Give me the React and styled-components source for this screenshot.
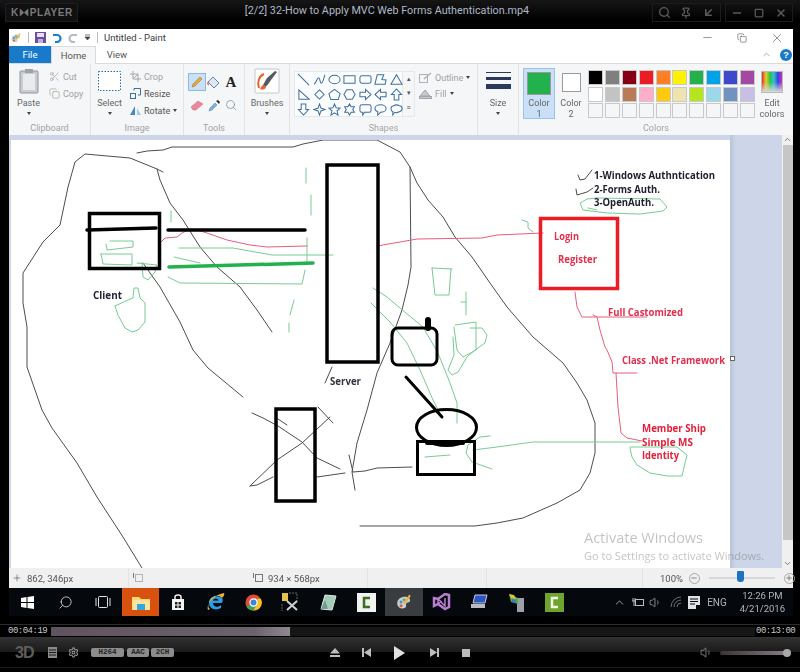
import styled, { createGlobalStyle } from 'styled-components';
import { Search, Pin, ArrowDownLeft, Minus, Square, X, ChevronUp, ChevronDown, Settings, Volume1, Plus, Scissors, Copy } from 'lucide-react';

const GlobalStyle = createGlobalStyle`
  html, body { margin: 0; padding: 0; background: #000; }
  body { font-family: Roboto, "Liberation Sans", sans-serif; }
`;

const ui = '"Open Sans", "Noto Sans", sans-serif';

// ---- drawing data, in page coordinates
const ink = [
  [[163, 172], [157, 169], [130, 158], [85, 154], [75, 162], [68, 187], [60, 225], [43, 242], [23, 273], [23, 303], [27, 327], [27, 367], [42, 410], [52, 428], [77, 463], [97, 497], [123, 537], [142, 568]],
  [[157, 169], [160, 180], [170, 203], [183, 220], [200, 247], [217, 267], [240, 287], [257, 310], [272, 332]],
  [[143, 263], [160, 287], [180, 322], [193, 350], [208, 368], [243, 397]],
  [[137, 153], [147, 151], [163, 150], [172, 147], [293, 147], [303, 144], [323, 140], [377, 140], [400, 152], [410, 167], [411, 267], [408, 285], [402, 310], [390, 343], [377, 373], [367, 410], [357, 443], [352, 472], [355, 490]],
  [[349, 455], [353, 472]],
  [[353, 472], [365, 471], [377, 468], [412, 467]],
  [[360, 526], [475, 526], [497, 523], [523, 518], [557, 503], [580, 490], [590, 473], [595, 453], [595, 423], [587, 400], [577, 383], [563, 363], [548, 350], [533, 337], [507, 307], [490, 283], [472, 257], [455, 237], [443, 217], [428, 200], [417, 183], [410, 167]],
  [[252, 413], [263, 418], [278, 426], [302, 442], [317, 458], [340, 469]],
  [[250, 486], [277, 460], [302, 443], [330, 417]],
  [[250, 486], [257, 485], [273, 477]],
  [[318, 407], [333, 423]],
  [[317, 477], [345, 473]],
  [[278, 419], [287, 425]],
  [[332, 367], [325, 383]],
  [[578, 175], [580, 180], [585, 179], [592, 170]],
  [[576, 189], [577, 195], [587, 192], [593, 188]],
];

const green = [
  [[110, 241], [133, 241], [133, 247], [107, 250], [106, 244]],
  [[101, 254], [132, 254], [132, 265], [103, 264], [101, 254]],
  [[137, 263], [157, 265], [155, 272], [148, 280], [143, 277], [142, 263]],
  [[179, 248], [233, 248], [272, 255], [333, 255]],
  [[174, 257], [200, 263]],
  [[168, 277], [180, 283], [302, 284], [305, 270]],
  [[306, 168], [306, 183]],
  [[311, 195], [311, 215]],
  [[307, 238], [307, 263]],
  [[294, 300], [290, 315]],
  [[289, 323], [289, 332]],
  [[171, 211], [171, 222]],
  [[115, 306], [128, 300], [133, 298], [134, 288], [138, 288], [140, 298], [145, 303], [145, 322], [138, 330], [132, 332], [125, 328], [118, 315], [115, 306]],
  [[373, 288], [387, 297], [400, 308], [423, 327], [438, 353], [450, 383], [457, 403], [457, 423]],
  [[371, 303], [390, 322], [407, 343], [420, 370], [433, 400], [443, 419]],
  [[432, 268], [452, 269]],
  [[432, 268], [435, 295], [449, 295], [451, 269]],
  [[466, 292], [466, 315]],
  [[461, 302], [466, 302]],
  [[453, 337], [454, 355], [448, 370], [452, 375], [458, 372], [467, 357], [475, 350], [485, 343], [487, 335], [482, 328], [470, 328]],
  [[455, 325], [476, 322], [476, 350], [463, 357], [457, 350], [454, 327]],
  [[473, 450], [497, 447], [533, 442], [640, 442]],
  [[490, 436], [480, 437], [468, 445], [466, 453], [472, 462], [492, 469]],
  [[425, 457], [450, 455]],
  [[630, 448], [632, 457], [637, 465], [650, 473], [667, 476], [682, 476], [685, 463], [687, 455], [677, 447], [630, 447]],
  [[597, 198], [587, 199], [580, 203], [583, 210], [607, 213], [640, 214], [663, 211], [667, 207], [660, 199], [597, 198]],
  [[588, 208], [597, 210]],
  [[522, 220], [528, 222], [528, 228], [533, 232]],
];

const red = [
  [[161, 242], [165, 238], [177, 237], [182, 233], [190, 229], [197, 230], [207, 233], [227, 240], [250, 245], [267, 247], [307, 246]],
  [[377, 246], [400, 242], [417, 239], [482, 238], [497, 235], [543, 233]],
  [[575, 292], [577, 307], [582, 317], [647, 317]],
  [[593, 315], [597, 317], [600, 330], [605, 347], [607, 350], [612, 362], [613, 373], [637, 373]],
  [[616, 373], [618, 407], [621, 433], [627, 438], [642, 441]],
];

const labels = [
  { x: 93, y: 299, w: 29, t: 'Client', c: '#23233a' },
  { x: 330, y: 385, w: 31, t: 'Server', c: '#33333f' },
  { x: 594, y: 179, w: 121, t: '1-Windows Authntication', c: '#1e1e2c' },
  { x: 594, y: 193, w: 66, t: '2-Forms Auth.', c: '#1e1e2c' },
  { x: 594, y: 206, w: 60, t: '3-OpenAuth.', c: '#1e1e2c' },
  { x: 554, y: 240, w: 25, t: 'Login', c: '#e12f4c' },
  { x: 558, y: 263, w: 39, t: 'Register', c: '#e12f4c' },
  { x: 608, y: 316, w: 75, t: 'Full Castomized', c: '#e12f4c' },
  { x: 622, y: 364, w: 103, t: 'Class .Net Framework', c: '#e12f4c' },
  { x: 642, y: 432, w: 64, t: 'Member Ship', c: '#e3203a' },
  { x: 642, y: 446, w: 51, t: 'Simple MS', c: '#e3203a' },
  { x: 642, y: 459, w: 37, t: 'Identity', c: '#e3203a' },
];

const pts = (list) => list.map((p) => p.join(',')).join(' ');

const shapePaths = [
  'M1 1L13 13', 'M1 12c3-1 3-7 5-7s1 6 3 6 3-8 4-9', 'M7 2.5c3.5 0 6 2 6 4.5s-2.500 4.500-6 4.500-6-2-6-4.500 2.500-4.500 6-4.500z', 'M1 3H13V11H1Z', 'M3 3H11Q13 3 13 5V9Q13 11 11 11H3Q1 11 1 9V5Q1 3 3 3Z', 'M1 12L3.500 2H10.500L8.500 7 13 7.500 12 12Z', 'M7 2L13 12H1Z',
  'M2 2L13 12H2Z', 'M7 2L12 7 7 12 2 7Z', 'M7 1.500L13 6 11 12.500H3L1 6Z', 'M4 2H10L13 7 10 12H4L1 7Z', 'M1 4.500H7V1.500L13 7 7 12.500V9.500H1Z', 'M13 4.500H7V1.500L1 7 7 12.500V9.500H13Z', 'M4.500 13V7H1.500L7 1 12.500 7H9.500V13Z',
  'M4.500 1V7H1.500L7 13 12.500 7H9.500V1Z', 'M7 1L8.500 5.500 13 7 8.500 8.500 7 13 5.500 8.500 1 7 5.500 5.500Z', 'M7 1L8.800 5.200 13 5.600 9.800 8.400 10.800 13 7 10.500 3.200 13 4.200 8.400 1 5.600 5.200 5.200Z', 'M7 1L8.700 4H12.200L10.500 7 12.200 10H8.700L7 13 5.300 10H1.800L3.500 7 1.800 4H5.300Z', 'M3 2H11Q13 2 13 4V8Q13 10 11 10H6L4 13V10H3Q1 10 1 8V4Q1 2 3 2Z', 'M7 2C10.500 2 13 3.800 13 6S10.500 10 7 10L4 13V9.500C2.200 8.800 1 7.500 1 6 1 3.800 3.500 2 7 2Z', 'M4 3Q7 1 10 3 13 3 13 6 13 9 10 9.500 7 11 5 10L3 13V9.500Q1 8.500 1 6 1 3.500 4 3Z',
];

const paletteTop = ['#000000', '#7f7f7f', '#880015', '#ed1c24', '#ff7f27', '#fff200', '#22b14c', '#00a2e8', '#3f48cc', '#a349a4'];
const paletteMid = ['#ffffff', '#c3c3c3', '#b97a57', '#ffaec9', '#ffc90e', '#efe4b0', '#b5e61d', '#99d9ea', '#7092be', '#c8bfe7'];
const paletteEmpty = Array(10).fill('#f5f6f7');

// ---- small drawn icons
const PaintIcon = ({ size = 12 }) => (
  <svg width={size} height={size} viewBox="0 0 24 24">
    <path d="M3 14c0-6 5-9 10-9 5 0 8 3 7 6-1 2-4 1-5 3-1 3 1 4-2 6-5 2-10-1-10-6z" fill="#c9ced4" />
    <circle cx="8" cy="12" r="2" fill="#3f8fd6" />
    <circle cx="12" cy="9" r="2" fill="#58b368" />
    <circle cx="8" cy="17" r="2" fill="#e05a3a" />
    <path d="M19 2l2 2-7 10-3 1 1-3z" fill="#e9b23c" />
  </svg>
);

const Caret = styled.span`
  display: block;
  width: 0;
  height: 0;
  border-left: 2.5px solid transparent;
  border-right: 2.5px solid transparent;
  border-top: 3px solid #444;
`;

// keeps a drawn icon a few pixels off its neighbour
const Nudge = styled.span`
  display: inline-flex;
  flex: none;
  margin-left: ${(p) => p.$l || 0}px;
  margin-right: ${(p) => p.$r || 0}px;
`;

// ---- player chrome
const Player = styled.div`
  width: 800px;
  height: 672px;
  background: #000;
  overflow: hidden;
  display: flex;
  flex-direction: column;
`;

const TitleBar = styled.header`
  height: 29px;
  flex: none;
  box-sizing: border-box;
  display: flex;
  align-items: flex-start;
  padding: 3px 7px 0 5px;
  background: linear-gradient(#161616, #000 70%);
`;

const Logo = styled.div`
  width: 73px;
  height: 19px;
  box-sizing: border-box;
  padding-left: 5px;
  border: 1px solid #1e1e1e;
  background: #101010;
  color: #7a7a7a;
  font: bold 10px/17px "Liberation Sans", sans-serif;
  letter-spacing: 0.55px;
`;

const MovieTitle = styled.div`
  flex: 1;
  text-align: center;
  padding-left: 44px;
  color: #aeb9c6;
  font: 10.8px/15px Roboto, sans-serif;
  white-space: nowrap;
`;

const CtrlGroup = styled.div`
  display: flex;
  align-items: center;
  justify-content: space-around;
  width: ${(p) => p.$w}px;
  margin-left: ${(p) => p.$ml || 0}px;
  height: 19px;
  color: #5a5a5a;
  border: 1px solid #1c1c1c;
  box-sizing: border-box;
`;

const Screen = styled.div`
  margin-left: 9px;
  width: 784px;
  height: 587px;
  flex: none;
  display: flex;
  flex-direction: column;
  filter: blur(0.35px);
`;

// ---- paint window
const PaintTitle = styled.div`
  height: 17px;
  flex: none;
  background: #fff;
  display: flex;
  align-items: center;
  padding-left: 1px;
  gap: 6px;
  color: #3a3a3a;
  font: 9.5px Roboto, sans-serif;
`;

const TitleSep = styled.span`
  width: 1px;
  height: 11px;
  background: #b9b9b9;
`;

const WinButtons = styled.div`
  margin-left: auto;
  display: flex;
  align-items: center;
  gap: 23px;
  padding-right: 9px;
  color: #444;
`;

const TabRow = styled.div`
  height: 18px;
  flex: none;
  background: #fff;
  display: flex;
  align-items: stretch;
  border-bottom: 1px solid #dadbdc;
  box-sizing: border-box;
  font: 9.5px Roboto, sans-serif;
  color: #555;
`;

const Tab = styled.div`
  width: ${(p) => p.$w}px;
  display: flex;
  align-items: center;
  justify-content: center;
  box-sizing: border-box;
  background: ${(p) => (p.$file ? '#1979ca' : p.$active ? '#f5f6f7' : '#fff')};
  color: ${(p) => (p.$file ? '#fff' : '#555')};
  border: ${(p) => (p.$active ? '1px solid #dadbdc' : '0')};
  border-bottom: 0;
  margin-bottom: ${(p) => (p.$active ? '-1px' : '0')};
`;

const TabTools = styled.div`
  margin-left: auto;
  display: flex;
  align-items: center;
  gap: 8px;
  padding-right: 1px;
  color: #aaa;
`;

const Help = styled.span`
  width: 12px;
  height: 12px;
  border-radius: 50%;
  background: #1979ca;
  color: #fff;
  font: bold 9px/12px "Liberation Sans", sans-serif;
  text-align: center;
`;

const Ribbon = styled.div`
  height: 71px;
  flex: none;
  display: flex;
  background: #f5f6f7;
  font: 9px Roboto, sans-serif;
  color: #666;
`;

const Group = styled.section`
  width: ${(p) => p.$w}px;
  flex: none;
  box-sizing: border-box;
  display: flex;
  flex-direction: column;
  border-right: ${(p) => (p.$last ? '0' : '1px solid #e2e3e4')};
`;

const GroupBody = styled.div`
  flex: 1;
  display: flex;
  min-height: 0;
  padding: ${(p) => p.$pad || '4px 0 0 0'};
  gap: ${(p) => p.$gap || 0}px;
`;

const GroupName = styled.div`
  height: 15px;
  flex: none;
  text-align: center;
  color: #a3a3a3;
  font-size: 9px;
  line-height: 17px;
`;

const BigTool = styled.div`
  width: ${(p) => p.$w}px;
  margin-top: ${(p) => p.$top || 0}px;
  display: flex;
  flex-direction: column;
  align-items: center;
  text-align: center;
  color: #666;
  line-height: 11px;
`;

const BigIcon = styled.div`
  height: 29px;
  margin-bottom: 3px;
  display: flex;
  align-items: center;
  justify-content: center;
`;

const CaretRow = styled.div`
  height: 9px;
  display: flex;
  align-items: center;
`;

const SmallCol = styled.div`
  display: flex;
  flex-direction: column;
  gap: ${(p) => p.$gap || 6}px;
  padding-top: ${(p) => p.$top || 0}px;
`;

const SmallTool = styled.div`
  display: flex;
  align-items: center;
  gap: 3px;
  height: 11px;
  color: ${(p) => (p.$off ? '#a2a2a2' : '#555')};
`;

const ToolGrid = styled.div`
  display: grid;
  grid-template-columns: 18px 16px 18px;
  grid-auto-rows: 18px;
  row-gap: 5px;
  margin-top: 1px;
`;

const ToolCell = styled.div`
  display: flex;
  align-items: center;
  justify-content: center;
  box-sizing: border-box;
  background: ${(p) => (p.$on ? '#c9e0f7' : 'transparent')};
  border: ${(p) => (p.$on ? '1px solid #8fb8e0' : '0')};
  font: bold 15px "Liberation Serif", serif;
  color: #222;
`;

const Gallery = styled.div`
  width: 109px;
  height: 46px;
  box-sizing: border-box;
  padding: 0 1px;
  background: #fbfcfd;
  border: 1px solid #e6e8ea;
  display: grid;
  grid-template-columns: repeat(7, 15.4px);
  grid-auto-rows: 15px;
  justify-items: center;
  align-items: center;
`;

const GalleryScroll = styled.div`
  width: 12px;
  height: 46px;
  box-sizing: border-box;
  border: 1px solid #e6e8ea;
  border-left: 0;
  display: flex;
  flex-direction: column;
  align-items: center;
  justify-content: space-around;
  color: #555;
  font-size: 7px;
  line-height: 1;
`;

const SizeLine = styled.span`
  display: block;
  width: 25px;
  height: ${(p) => p.$h}px;
  margin-bottom: ${(p) => p.$mb}px;
  background: #2b3a5c;
`;

const ColorBtn = styled.div`
  width: ${(p) => p.$w}px;
  height: 51px;
  box-sizing: border-box;
  display: flex;
  flex-direction: column;
  align-items: center;
  text-align: center;
  color: #666;
  line-height: 11px;
  background: ${(p) => (p.$on ? '#c9e0f7' : 'transparent')};
  border: ${(p) => (p.$on ? '1px solid #9cc3e8' : '1px solid transparent')};
`;

const BigSwatch = styled.span`
  width: ${(p) => p.$s}px;
  height: ${(p) => p.$h}px;
  margin: ${(p) => p.$m};
  flex: none;
  box-sizing: border-box;
  background: ${(p) => p.$c};
  border: 1px solid #9a9a9a;
`;

const Palette = styled.div`
  margin: 2px 0 0 1px;
  display: grid;
  grid-template-columns: repeat(10, 15px);
  grid-auto-rows: 15px;
  gap: 1.700px 1.900px;
`;

const Swatch = styled.span`
  background: ${(p) => p.$c};
  border: 1px solid #c9c9c9;
  box-sizing: border-box;
`;

const RainbowBox = styled.div`
  width: 22px;
  height: 22px;
  margin-bottom: 5px;
  flex: none;
  box-sizing: border-box;
  border: 1px solid #bbb;
  background: linear-gradient(to bottom, transparent 50%, #d8d8d8), linear-gradient(to right, #e03030, #e0d030, #30c040, #30c0d0, #3040e0, #d030c0);
`;

// ---- canvas
const WorkArea = styled.div`
  height: 433px;
  flex: none;
  display: flex;
  position: relative;
  background: #cdd6e8;
`;

const SideStrip = styled.div`
  width: 2px;
  flex: none;
`;

const PageWrap = styled.div`
  width: 719px;
  margin-top: 5px;
  flex: none;
  background: #fff;
`;

const Drawing = styled.svg`
  display: block;
  width: 719px;
  height: 428px;
`;

const Backdrop = styled.div`
  width: 52px;
  flex: none;
  background: linear-gradient(to right, #b8c3da, #cdd6e8 6px);
`;

const ScrollBar = styled.div`
  width: 11px;
  flex: none;
  background: #f0f0f0;
  display: flex;
  flex-direction: column;
  align-items: center;
  color: #555;
`;

const ScrollThumb = styled.div`
  flex: 1;
  width: 10px;
  margin: 1px 0 19px;
  background: #c6c6c6;
`;

const Handle = styled.span`
  position: absolute;
  left: 721px;
  top: 221px;
  width: 3px;
  height: 3px;
  background: #fff;
  border: 1px solid #666;
`;

const Watermark = styled.div`
  position: absolute;
  left: 575px;
  top: 392px;
  color: rgba(90, 90, 90, 0.36);
  font-family: ${ui};
  white-space: nowrap;
  pointer-events: none;
`;

const WatermarkBig = styled.div`
  font-size: 14.500px;
  line-height: 21px;
`;

const WatermarkSmall = styled.div`
  font-size: 11px;
  line-height: 15px;
`;

const Ink = styled.polyline`
  fill: none;
  stroke: ${(p) => p.$c};
  stroke-width: ${(p) => p.$w || 1};
  stroke-linejoin: round;
  stroke-linecap: round;
`;

const BoxShape = styled.rect`
  fill: none;
  stroke: ${(p) => p.$c || '#000'};
  stroke-width: ${(p) => p.$w || 3.500};
`;

const Label = styled.text`
  font: 700 10px ${ui};
`;

// ---- status bar
const StatusBar = styled.div`
  height: 20px;
  flex: none;
  display: flex;
  align-items: center;
  background: #f0f0f0;
  color: #555;
  font: 9.500px Roboto, sans-serif;
`;

const StatusCell = styled.div`
  width: ${(p) => p.$w}px;
  height: 100%;
  flex: none;
  box-sizing: border-box;
  display: flex;
  align-items: center;
  gap: ${(p) => p.$gap || 5}px;
  padding-left: ${(p) => p.$pl || 0}px;
  border-right: ${(p) => (p.$line ? '1px solid #e3e3e3' : '0')};
`;

const ZoomBtn = styled.span`
  width: 11px;
  height: 11px;
  box-sizing: border-box;
  border: 1px solid #a8a8a8;
  border-radius: 50%;
  color: #555;
  display: flex;
  align-items: center;
  justify-content: center;
  flex: none;
`;

const ZoomTrack = styled.div`
  width: 66px;
  height: 2px;
  flex: none;
  background: #d8d8d8;
  position: relative;
  margin: 0 3px;
`;

const ZoomThumb = styled.span`
  position: absolute;
  left: 28px;
  top: -6px;
  width: 7px;
  height: 11px;
  background: #1c73c4;
  border-radius: 1px 1px 3px 3px;
`;

// ---- taskbar
const Taskbar = styled.div`
  height: 28px;
  flex: none;
  display: flex;
  align-items: stretch;
  background: #05080c;
`;

const TaskCell = styled.div`
  width: 37.600px;
  flex: none;
  display: flex;
  align-items: center;
  justify-content: center;
  background: ${(p) => p.$bg || 'transparent'};
  color: #dfe3e6;
`;

const MirrorIcon = styled.span`
  display: inline-flex;
  transform: scaleX(-1);
`;

const Tray = styled.div`
  margin-left: auto;
  display: flex;
  align-items: center;
  gap: 5px;
  padding-right: 8px;
  color: #b8bdc2;
`;

const TrayText = styled.span`
  color: #aeb6bd;
  font: 10px Roboto, sans-serif;
  margin: 0 8px 0 2px;
`;

const Clock = styled.div`
  color: #aeb6bd;
  font: 9.500px/13px Roboto, sans-serif;
  text-align: center;
  white-space: nowrap;
`;

// ---- player bottom
const SeekRow = styled.div`
  height: 13px;
  flex: none;
  box-sizing: border-box;
  border-top: 1px solid #2c2c2c;
  margin-top: 8px;
  display: flex;
  align-items: center;
  color: #c9c9c9;
  font: 9px "Liberation Mono", monospace;
  letter-spacing: -0.500px;
`;

const TimeText = styled.span`
  width: ${(p) => p.$w}px;
  flex: none;
  padding-left: ${(p) => p.$pl}px;
  box-sizing: border-box;
  white-space: nowrap;
`;

const SeekTrack = styled.div`
  width: 704px;
  height: 9px;
  flex: none;
  background: #161616;
`;

const SeekFill = styled.div`
  height: 100%;
  background: linear-gradient(to right, #5e535e, #6c626c 85%, #8f8890);
`;

const Controls = styled.div`
  height: 31px;
  flex: none;
  box-sizing: border-box;
  display: flex;
  align-items: center;
  padding-left: 15px;
  border-top: 1px solid #333;
  border-bottom: 1px solid #1b1b1b;
  background: linear-gradient(#303030, #1a1a1a 48%, #000 50%);
  color: #8a8a8a;
`;

const ControlsLeft = styled.div`
  width: 314px;
  flex: none;
  display: flex;
  align-items: center;
`;

const ThreeD = styled.span`
  width: 20px;
  color: #5d5d5d;
  font: bold 16px/16px "Liberation Sans", sans-serif;
  letter-spacing: -1px;
  margin-right: 13px;
`;

const Badge = styled.span`
  height: 9px;
  width: ${(p) => p.$w}px;
  margin-left: ${(p) => p.$ml || 0}px;
  flex: none;
  border-radius: 2px;
  background: #8c8c8c;
  color: #222;
  text-align: center;
  font: bold 7.500px/9px "Liberation Mono", monospace;
`;

const TransportBtns = styled.div`
  display: flex;
  gap: 19px;
  align-items: center;
  color: #bdbdbd;
`;

const VolumeArea = styled.div`
  margin-left: auto;
  display: flex;
  align-items: center;
  gap: 7px;
  padding-right: 13px;
  color: #666;
`;

const VolumeTrack = styled.div`
  width: 67px;
  height: 4px;
  border-radius: 2px;
  background: linear-gradient(to right, #3a3338, #847e84);
  position: relative;
`;

const VolumeKnob = styled.span`
  position: absolute;
  right: -4px;
  top: -2px;
  width: 8px;
  height: 8px;
  border-radius: 50%;
  background: #a8a8a8;
`;

function ShapeIcon({ d }) {
  return (
    <svg width="13" height="13" viewBox="0 0 14 14" fill="none" stroke="#3f6f9e" strokeWidth="1.100">
      <path d={d} />
    </svg>
  );
}

function Canvas() {
  return (
    <Drawing viewBox="11 140 719 428">
      {ink.map((l, i) => <Ink key={i} points={pts(l)} $c="#4d4d4d" />)}
      {green.map((l, i) => <Ink key={i} points={pts(l)} $c="#76cc93" />)}
      {red.map((l, i) => <Ink key={i} points={pts(l)} $c="#e65f7c" />)}
      <BoxShape x="89.500" y="213.500" width="70" height="55" />
      <BoxShape x="327" y="165" width="51" height="197" />
      <BoxShape x="276" y="409" width="39" height="92" />
      <BoxShape x="392" y="328" width="45" height="37" rx="6" $w={3} />
      <BoxShape x="417.500" y="441.500" width="57" height="33" $w={3} />
      <ellipse cx="446.500" cy="427.500" rx="30" ry="18" fill="none" stroke="#000" strokeWidth="3" />
      <BoxShape x="540.500" y="218.500" width="77" height="70" $c="#ed1c24" />
      <Ink points="87,230 156,228" $c="#000" $w={3.500} />
      <Ink points="168,230 305,230" $c="#000" $w={3.500} />
      <Ink points="169,267 313,263" $c="#22b14c" $w={3.500} />
      <Ink points="428,320 428,328" $c="#000" $w={6} />
      <Ink points="406,377 442,417" $c="#000" $w={3} />
      <Ink points="427,443 463,443" $c="#000" $w={4} />
      {labels.map((l) => (
        <Label key={l.t} x={l.x} y={l.y} fill={l.c} textLength={l.w} lengthAdjust="spacingAndGlyphs">{l.t}</Label>
      ))}
    </Drawing>
  );
}

function RibbonBar() {
  return (
    <Ribbon>
      <Group $w={82}>
        <GroupBody $pad="2px 0 0 9px" $gap={10}>
          <BigTool $w={21}>
            <BigIcon>
              <svg width="20" height="26" viewBox="0 0 20 26">
                <rect x="1" y="3" width="18" height="22" rx="1" fill="#c9cdd2" stroke="#8f959c" />
                <rect x="4" y="6" width="12" height="16" fill="#e9ebee" />
                <rect x="6" y="1" width="8" height="4" fill="#9da3aa" />
              </svg>
            </BigIcon>
            Paste
            <CaretRow><Caret /></CaretRow>
          </BigTool>
          <SmallCol $gap={6} $top={5}>
            <SmallTool $off><Scissors size={11} strokeWidth={1.500} /> Cut</SmallTool>
            <SmallTool $off><Copy size={11} strokeWidth={1.500} /> Copy</SmallTool>
          </SmallCol>
        </GroupBody>
        <GroupName>Clipboard</GroupName>
      </Group>
      <Group $w={93}>
        <GroupBody $pad="2px 0 0 7px" $gap={9}>
          <BigTool $w={23}>
            <BigIcon>
              <svg width="23" height="20" viewBox="0 0 23 20">
                <rect x="0.500" y="0.500" width="22" height="19" fill="#fff" stroke="#2a6fb0" strokeDasharray="1.500 1.500" />
              </svg>
            </BigIcon>
            Select
            <CaretRow><Caret /></CaretRow>
          </BigTool>
          <SmallCol $gap={6} $top={5}>
            <SmallTool $off>
              <svg width="11" height="11" viewBox="0 0 11 11" fill="none" stroke="#a2a8ae"><path d="M3 0V8H11M0 3H8V11" /><path d="M3 8L8 3" /></svg>
              Crop
            </SmallTool>
            <SmallTool>
              <svg width="11" height="11" viewBox="0 0 11 11" fill="none" stroke="#3f6f9e"><rect x="0.500" y="5.500" width="5" height="5" /><path d="M4 2.500V0.500H10.500V7H8" /></svg>
              Resize
            </SmallTool>
            <SmallTool>
              <svg width="11" height="11" viewBox="0 0 11 11"><path d="M5 1V10H0Z" fill="#4a88c4" /><path d="M7 3L11 10H7Z" fill="#a9c8e2" /></svg>
              Rotate <Caret />
            </SmallTool>
          </SmallCol>
        </GroupBody>
        <GroupName>Image</GroupName>
      </Group>
      <Group $w={61}>
        <GroupBody $pad="8px 0 0 4px">
          <ToolGrid>
            <ToolCell $on>
              <svg width="12" height="12" viewBox="0 0 12 12"><path d="M1 11L2 8 9 1l2 2-7 7z" fill="#e9a93c" stroke="#8a6a2a" strokeWidth="0.500" /></svg>
            </ToolCell>
            <ToolCell>
              <svg width="14" height="14" viewBox="0 0 14 14"><path d="M6 2l6 6-5 5-6-6z" fill="#dfe7ef" stroke="#5c86ad" /><path d="M1 7c-1 2 0 3 1 3" fill="#e05a5a" stroke="#e05a5a" /></svg>
            </ToolCell>
            <ToolCell>A</ToolCell>
            <ToolCell>
              <svg width="14" height="12" viewBox="0 0 14 12"><path d="M1 8l7-6 5 3-7 6H3z" fill="#e58a9a" stroke="#c96a7a" strokeWidth="0.500" /></svg>
            </ToolCell>
            <ToolCell>
              <svg width="13" height="13" viewBox="0 0 13 13"><path d="M1 12l1-3 5-5 2 2-5 5z" fill="#7fb0d8" stroke="#4a7aa5" strokeWidth="0.500" /><path d="M8 2l3 3 1-2-2-2z" fill="#333" /></svg>
            </ToolCell>
            <ToolCell>
              <Search size={12} strokeWidth={1.500} color="#7a8a99" />
            </ToolCell>
          </ToolGrid>
        </GroupBody>
        <GroupName>Tools</GroupName>
      </Group>
      <Group $w={45}>
        <GroupBody $pad="2px 0 0 0">
          <BigTool $w={44}>
            <BigIcon>
              <svg width="26" height="26" viewBox="0 0 26 26">
                <rect x="1" y="1" width="24" height="24" rx="1" fill="#fff" stroke="#c4c8cc" />
                <path d="M5 20c-2-6 0-12 5-14" fill="none" stroke="#e8622c" strokeWidth="2" />
                <path d="M10 20c3-2 5-5 7-8l6-8-2-1-8 7-4 7z" fill="#56595e" />
                <path d="M6 21c2 1 5 1 6-2l-2-2c-2 0-3 2-4 4z" fill="#e8622c" />
              </svg>
            </BigIcon>
            Brushes
            <CaretRow><Caret /></CaretRow>
          </BigTool>
        </GroupBody>
      </Group>
      <Group $w={188}>
        <GroupBody $pad="7px 0 0 4px">
          <Gallery>
            {shapePaths.map((d) => <ShapeIcon key={d} d={d} />)}
          </Gallery>
          <GalleryScroll>
            <span>▴</span>
            <span>▾</span>
            <span>≡</span>
          </GalleryScroll>
          <SmallCol $gap={5} $top={1}>
            <SmallTool $off>
              <Nudge $l={4}>
                <svg width="13" height="11" viewBox="0 0 13 11" fill="none" stroke="#aeb2b6"><rect x="0.500" y="2.500" width="8" height="8" /><path d="M5 7L12 1" strokeWidth="1.500" /></svg>
              </Nudge>
              Outline <Caret />
            </SmallTool>
            <SmallTool $off>
              <Nudge $l={4}>
                <svg width="13" height="11" viewBox="0 0 13 11" fill="#c6cad0" stroke="#9fa5ab"><path d="M1 8l5-6 5 6z" /><rect x="0.500" y="8.500" width="12" height="2" /></svg>
              </Nudge>
              Fill <Caret />
            </SmallTool>
          </SmallCol>
        </GroupBody>
        <GroupName>Shapes</GroupName>
      </Group>
      <Group $w={41}>
        <GroupBody $pad="2px 0 0 0">
          <BigTool $w={40}>
            <BigIcon>
              <div>
                <SizeLine $h={1} $mb={4} />
                <SizeLine $h={3} $mb={4} />
                <SizeLine $h={5} $mb={0} />
              </div>
            </BigIcon>
            Size
            <CaretRow><Caret /></CaretRow>
          </BigTool>
        </GroupBody>
      </Group>
      <Group $w={274} $last>
        <GroupBody $pad="4px 0 0 4px" $gap={4}>
          <ColorBtn $w={32} $on>
            <BigSwatch $s={24} $h={23} $m="3px 0 3px" $c="#22b14c" />
            Color<br />1
          </ColorBtn>
          <ColorBtn $w={24}>
            <BigSwatch $s={19} $h={19} $m="4px 0 6px" $c="#fff" />
            Color<br />2
          </ColorBtn>
          <Palette>
            {[...paletteTop, ...paletteMid, ...paletteEmpty].map((c, i) => <Swatch key={i} $c={c} />)}
          </Palette>
          <BigTool $w={26} $top={3}>
            <RainbowBox />
            Edit<br />colors
          </BigTool>
        </GroupBody>
        <GroupName>Colors</GroupName>
      </Group>
    </Ribbon>
  );
}

function TaskbarRow() {
  return (
    <Taskbar>
      <TaskCell>
        <svg width="13" height="13" viewBox="0 0 13 13" fill="#fff"><path d="M0 2l5.500-1v5H0zM6.500 1L13 0v6H6.500zM0 7h5.500v5L0 11zM6.500 7H13v6l-6.500-1z" /></svg>
      </TaskCell>
      <TaskCell><MirrorIcon><Search size={15} strokeWidth={1.300} /></MirrorIcon></TaskCell>
      <TaskCell>
        <svg width="16" height="12" viewBox="0 0 16 12" fill="none" stroke="#dfe3e6"><rect x="3.500" y="0.500" width="9" height="11" rx="1" /><path d="M1 2v8M15 2v8" /></svg>
      </TaskCell>
      <TaskCell $bg="#d9510f">
        <svg width="18" height="15" viewBox="0 0 18 15"><path d="M0 2h7l2 2h9v11H0z" fill="#f8d775" /><rect y="5" width="18" height="10" fill="#fbe39b" /><rect x="5" y="9" width="8" height="6" fill="#2fa8e0" /></svg>
      </TaskCell>
      <TaskCell>
        <svg width="14" height="17" viewBox="0 0 14 17"><path d="M1 5h12v11H1z" fill="#f4f4f4" /><path d="M4 5V3q0-2 3-2t3 2v2" fill="none" stroke="#f4f4f4" strokeWidth="1.500" /><path d="M4 8h2.500v2.500H4zM7.500 8H10v2.500H7.500zM4 11.500h2.500V14H4zM7.500 11.500H10V14H7.500z" fill="#222" /></svg>
      </TaskCell>
      <TaskCell>
        <svg width="20" height="20" viewBox="0 0 20 20">
          <path d="M16 11H7c0 4 5 5 8 2v3c-5 3-12 1-12-5 0-6 7-9 13-5 1 1 1 3 0 5zM7 8.500h5.500C12 6 8 6 7 8.500z" fill="#2d9be0" />
          <path d="M2 18C0 12 8 3 18 1c1 2-1 4-2 5-4-4-11-3-13 5-1 2-1 5 1 6z" fill="#e8b53a" />
        </svg>
      </TaskCell>
      <TaskCell>
        <svg width="17" height="17" viewBox="0 0 18 18">
          <circle cx="9" cy="9" r="8.500" fill="#dd4b39" />
          <path d="M9 9L1.500 13.500A8.500 8.500 0 0 0 9 17.500L13 10z" fill="#3aa757" />
          <path d="M9 5h7.800A8.500 8.500 0 0 1 9 17.500L13 10z" fill="#f6c026" />
          <circle cx="9" cy="9" r="3.800" fill="#3f82e0" stroke="#fff" strokeWidth="1.300" />
        </svg>
      </TaskCell>
      <TaskCell>
        <svg width="19" height="20" viewBox="0 0 19 20">
          <rect x="1" y="1" width="6" height="8" fill="#e6c24a" />
          <path d="M8 1h8v8M1 12v7" fill="none" stroke="#666" strokeDasharray="2 1" />
          <path d="M6 9l10 9M16 9L6 18" stroke="#d0d0d0" strokeWidth="2" />
        </svg>
      </TaskCell>
      <TaskCell>
        <svg width="17" height="17" viewBox="0 0 17 17"><path d="M5 1L16 2 12 16 1 15z" fill="#a3cdb8" stroke="#dfe9e4" /><path d="M1 15L5 6 8 15z" fill="#6f9f8a" /></svg>
      </TaskCell>
      <TaskCell>
        <svg width="19" height="19" viewBox="0 0 19 19">
          <rect width="19" height="19" fill="#f2f2f2" />
          <path d="M13 5H7V14H13" fill="none" stroke="#3c6e1f" strokeWidth="2.500" />
        </svg>
      </TaskCell>
      <TaskCell $bg="#3a3d40"><PaintIcon size={18} /></TaskCell>
      <TaskCell>
        <svg width="19" height="18" viewBox="0 0 19 18" fill="none" stroke="#b77fce" strokeWidth="2.500"><path d="M2 5v8l4-2 7 5 4-2V2l-4-1-7 5z" /><path d="M6 6v5l3-2.500zM13 5v8l-4-4" strokeWidth="1.500" /></svg>
      </TaskCell>
      <TaskCell>
        <svg width="18" height="16" viewBox="0 0 18 16"><path d="M5 1h12l-2 8H3z" fill="#2b56c8" stroke="#c9cdd2" /><path d="M1 10h14v4H1z" fill="#b9bdc2" /></svg>
      </TaskCell>
      <TaskCell>
        <svg width="17" height="19" viewBox="0 0 17 19"><rect x="9" y="5" width="7" height="14" fill="#9aa1a8" /><path d="M1 1l9 4v6L3 9z" fill="#5ca94a" /><path d="M1 1l5 1 2 4-5-1z" fill="#e0c23a" /><path d="M4 6l4 1v3L4 9z" fill="#3b78c9" /></svg>
      </TaskCell>
      <TaskCell>
        <svg width="19" height="19" viewBox="0 0 19 19"><rect width="19" height="19" fill="#6fa52f" /><path d="M13 5H7V14H13" fill="none" stroke="#f2f7e8" strokeWidth="2.500" /></svg>
      </TaskCell>
      <Tray>
        <ChevronUp size={13} strokeWidth={1.500} />
        <svg width="13" height="11" viewBox="0 0 13 11" fill="none" stroke="#b8bdc2"><rect x="4.500" y="2.500" width="8" height="6" /><path d="M2 1v3M4 1v3M1 4h4M3 4v5" /></svg>
        <Volume1 size={13} strokeWidth={1.300} />
        <Nudge $l={3}>
          <svg width="13" height="12" viewBox="0 0 13 12" fill="none" stroke="#6d7278"><path d="M1 11A10 10 0 0 1 11 1M4 11A7 7 0 0 1 11 4M7 11A4 4 0 0 1 11 7" /></svg>
        </Nudge>
        <svg width="12" height="13" viewBox="0 0 12 13" fill="#dfe3e6"><path d="M0 0h12v9H8v4H0z" /><path d="M2 3h8M2 5.500h8M2 8h5" stroke="#05080c" /></svg>
        <TrayText>ENG</TrayText>
        <Clock>12:26 PM<br />4/21/2016</Clock>
      </Tray>
    </Taskbar>
  );
}

export default function App() {
  const progress = (239 / 704) * 100;
  return (
    <Player>
      <GlobalStyle />
      <TitleBar>
        <Logo>K⏵⏴PLAYER</Logo>
        <MovieTitle>[2/2] 32-How to Apply MVC Web Forms Authentication.mp4</MovieTitle>
        <CtrlGroup $w={69}>
          <Search size={13} strokeWidth={2.500} />
          <Pin size={12} strokeWidth={2.500} />
          <ArrowDownLeft size={13} strokeWidth={3} />
        </CtrlGroup>
        <CtrlGroup $w={68} $ml={4}>
          <Minus size={12} strokeWidth={3} />
          <Square size={10} strokeWidth={3} />
          <X size={12} strokeWidth={3} />
        </CtrlGroup>
      </TitleBar>
      <Screen>
        <PaintTitle>
          <PaintIcon />
          <TitleSep />
          <svg width="11" height="11" viewBox="0 0 11 11"><rect width="11" height="11" fill="#6c4f9c" /><rect x="2" y="1" width="7" height="4" fill="#e5e0ee" /><rect x="3" y="7" width="5" height="4" fill="#bdb3d1" /></svg>
          <svg width="10" height="10" viewBox="0 0 10 10" fill="none" stroke="#1f7fd0" strokeWidth="2.200"><path d="M1 2h4a3 3 0 0 1 0 7H3" /></svg>
          <svg width="10" height="10" viewBox="0 0 10 10" fill="none" stroke="#b6bcc2" strokeWidth="2.200"><path d="M9 2H5a3 3 0 0 0 0 7h2" /></svg>
          <svg width="7" height="7" viewBox="0 0 7 7"><path d="M1 1h5M1 3h5l-2.500 3z" stroke="#444" fill="#444" strokeWidth="0.700" /></svg>
          <TitleSep />
          Untitled - Paint
          <WinButtons>
            <Minus size={13} strokeWidth={1} />
            <Copy size={10} strokeWidth={1.300} />
            <X size={14} strokeWidth={1} />
          </WinButtons>
        </PaintTitle>
        <TabRow>
          <Tab $w={42} $file>File</Tab>
          <Tab $w={45} $active>Home</Tab>
          <Tab $w={42}>View</Tab>
          <TabTools>
            <ChevronUp size={11} />
            <Help>?</Help>
          </TabTools>
        </TabRow>
        <RibbonBar />
        <WorkArea>
          <SideStrip />
          <PageWrap><Canvas /></PageWrap>
          <Backdrop />
          <ScrollBar>
            <ChevronUp size={9} strokeWidth={2} />
            <ScrollThumb />
            <ChevronDown size={9} strokeWidth={2} />
          </ScrollBar>
          <Handle />
          <Watermark>
            <WatermarkBig>Activate Windows</WatermarkBig>
            <WatermarkSmall>Go to Settings to activate Windows.</WatermarkSmall>
          </Watermark>
        </WorkArea>
        <StatusBar>
          <StatusCell $w={120} $pl={3} $gap={5} $line>
            <Plus size={10} strokeWidth={1.500} />
            862, 346px
          </StatusCell>
          <StatusCell $w={120} $pl={3}>
            <svg width="11" height="10" viewBox="0 0 11 10" fill="none" stroke="#777"><rect x="3.500" y="1.500" width="7" height="7" strokeDasharray="1 1" /><path d="M1.500 0v5" /></svg>
          </StatusCell>
          <StatusCell $w={119} $pl={3} $line>
            <svg width="11" height="10" viewBox="0 0 11 10" fill="none" stroke="#777"><rect x="3.500" y="1.500" width="7" height="7" /><path d="M1.500 0v5" /></svg>
            934 × 568px
          </StatusCell>
          <StatusCell $w={119} $line />
          <StatusCell $w={156} $line />
          <StatusCell $w={150} $pl={17} $gap={6}>
            100%
            <ZoomBtn><Minus size={8} /></ZoomBtn>
            <ZoomTrack><ZoomThumb /></ZoomTrack>
            <ZoomBtn><Plus size={8} /></ZoomBtn>
          </StatusCell>
        </StatusBar>
        <TaskbarRow />
      </Screen>
      <SeekRow>
        <TimeText $w={51} $pl={8}>00:04:19</TimeText>
        <SeekTrack>
          <SeekFill style={{ width: `${progress}%` }} />
        </SeekTrack>
        <TimeText $w={45} $pl={1}>00:13:00</TimeText>
      </SeekRow>
      <Controls>
        <ControlsLeft>
          <ThreeD>3D</ThreeD>
          <Nudge $r={11}>
            <svg width="9" height="11" viewBox="0 0 9 11" fill="#8a8a8a"><path d="M0 0h9v11H0z" /><path d="M1 3h7M1 5.500h7M1 8h7" stroke="#1a1a1a" /></svg>
          </Nudge>
          <Nudge $r={12}><Settings size={11} strokeWidth={2.500} /></Nudge>
          <Badge $w={33}>H264</Badge>
          <Badge $w={22} $ml={3}>AAC</Badge>
          <Badge $w={23} $ml={2}>2CH</Badge>
        </ControlsLeft>
        <TransportBtns>
          <svg width="12" height="9" viewBox="0 0 12 9" fill="currentColor"><path d="M6 0l5 5.500H1zM1 7h10v2H1z" /></svg>
          <Nudge $l={2}>
            <svg width="9" height="9" viewBox="0 0 9 9" fill="currentColor"><path d="M0 0h2v9H0zM9 0v9L2 4.500z" /></svg>
          </Nudge>
          <Nudge $l={3}>
            <svg width="12" height="14" viewBox="0 0 12 14" fill="#e0e0e0"><path d="M1 0l11 7-11 7z" /></svg>
          </Nudge>
          <Nudge $l={6}>
            <svg width="9" height="9" viewBox="0 0 9 9" fill="currentColor"><path d="M0 0v9l7-4.500zM7 0h2v9H7z" /></svg>
          </Nudge>
          <Nudge $l={4}>
            <svg width="8" height="8" viewBox="0 0 8 8" fill="currentColor"><rect width="8" height="8" /></svg>
          </Nudge>
        </TransportBtns>
        <VolumeArea>
          <Volume1 size={13} strokeWidth={2} />
          <VolumeTrack><VolumeKnob /></VolumeTrack>
        </VolumeArea>
      </Controls>
    </Player>
  );
}
